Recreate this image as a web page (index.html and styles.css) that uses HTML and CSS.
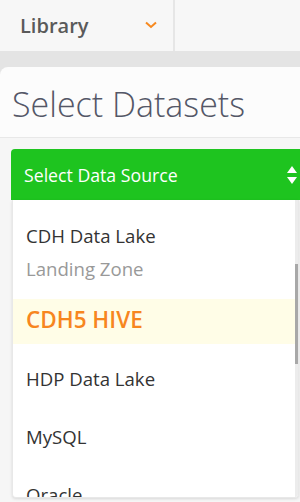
FILE: index.html
```html
<!DOCTYPE html>
<html lang="en">
<head>
    <meta charset="UTF-8">
    <meta name="viewport" content="width=device-width, initial-scale=1.0">
    <title>Select Datasets</title>
    <link rel="stylesheet" href="styles.css">
</head>
<body>
    <div class="topbar">
        <div class="tab">
            <span>Library</span>
            <svg class="chevron" width="12" height="8" viewBox="0 0 12 8">
                <path d="M1 1.5 L6 6 L11 1.5" fill="none" stroke="#f7891f" stroke-width="2"/>
            </svg>
        </div>
    </div>

    <div class="card">
        <h2 class="card-title">Select Datasets</h2>
        <div class="card-body">
            <div class="select">
                <span>Select Data Source</span>
                <svg class="arrows" width="12" height="24" viewBox="0 0 12 24">
                    <path d="M6 3 L11 10 L1 10 Z" fill="#fff"/>
                    <path d="M1 14 L11 14 L6 21 Z" fill="#fff"/>
                </svg>
            </div>
            <div class="options">
                <div class="option first">CDH Data Lake</div>
                <div class="option sub">Landing Zone</div>
                <div class="option active">CDH5 HIVE</div>
                <div class="option">HDP Data Lake</div>
                <div class="option">MySQL</div>
                <div class="option">Oracle</div>
                <div class="scroll-thumb"></div>
            </div>
        </div>
    </div>
</body>
</html>
```

FILE: styles.css
```css
* {
    margin: 0;
    padding: 0;
    box-sizing: border-box;
    font-family: 'Open Sans', sans-serif;
}

body {
    background: #e4e4e4;
    height: 502px;
    overflow: hidden;
}

.topbar {
    display: flex;
    height: 51px;
    background: #f7f7f7;
}

.tab {
    width: 175px;
    display: flex;
    align-items: center;
    justify-content: space-between;
    padding: 0 16px 0 20px;
    border-right: 2px solid #e6e6e6;
    font-size: 20px;
    font-weight: 600;
    color: #5a5a5a;
}

.chevron {
    margin-top: -2px;
}

.card {
    margin-top: 16px;
    background: #fcfcfc;
    border-radius: 8px 0 0 0;
    height: 435px;
    overflow: hidden;
}

.card-title {
    font-size: 34px;
    font-weight: 300;
    line-height: 33px;
    color: #545767;
    padding: 21px 12px 16px;
    border-bottom: 1px solid #e8e8e8;
}

.card-body {
    background: #f6f6f6;
    padding: 11px 0 0 11px;
    height: 100%;
}

.select {
    height: 51px;
    background: #1ec41f;
    border-radius: 4px 0 0 0;
    display: flex;
    align-items: center;
    justify-content: space-between;
    padding: 0 2px 0 13px;
    color: #fff;
    font-size: 17.7px;
}

.options {
    position: relative;
    height: 298px;
    margin: 0 1px 0 1px;
    background: #fff;
    border: 1px solid #e8e8e8;
    border-top: none;
    border-radius: 0 0 4px 4px;
    box-shadow: 0 1px 3px rgba(0, 0, 0, 0.12);
    overflow: hidden;
    padding-top: 19px;
}

.options::after { /* scrollbar track */
    content: '';
    position: absolute;
    top: 0;
    right: 0;
    width: 3px;
    height: 100%;
    background: #ececec;
}

.scroll-thumb {
    position: absolute;
    top: 64px;
    right: 0;
    width: 3px;
    height: 100px;
    background: #a8a8a8;
    z-index: 1;
}

.option {
    font-size: 18.6px;
    line-height: 33px;
    color: #333;
    padding: 18px 13px 7px;
    white-space: nowrap;
}

.option.first {
    padding-top: 0;
    padding-bottom: 0;
}

.option.sub {
    color: #999;
    padding-top: 0;
    padding-bottom: 0;
    margin-bottom: 14px;
}

.option.active {
    background: #fffde7;
    color: #f7861e;
    font-size: 22.5px;
    font-weight: 600;
    line-height: 42px;
    padding: 0 13px 3px;
}
```
